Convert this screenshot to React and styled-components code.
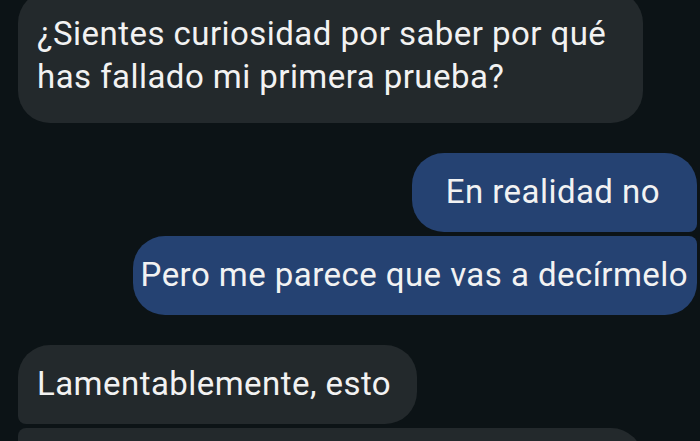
import React from 'react'
import styled, { createGlobalStyle } from 'styled-components'

const GlobalStyle = createGlobalStyle`
    html, body {
        margin: 0;
        padding: 0;
        background: #0c1316;
        height: 441px;
        overflow: hidden;
    }
    body {
        font-family: Roboto, "Liberation Sans", sans-serif;
    }
`;

const Thread = styled.div`
    display: flex;
    flex-direction: column;
    gap: 30px;
    padding: 0 3px 0 18px;
    width: 700px;
    box-sizing: border-box;
`;

const Group = styled.div`
    display: flex;
    flex-direction: column;
    gap: 4px;
    align-items: ${p => (p.$out ? 'flex-end' : 'flex-start')};
    margin-top: ${p => p.$offset || 0};
`;

const Bubble = styled.div`
    box-sizing: border-box;
    max-width: 625px;
    width: ${p => (p.$fill ? '625px' : 'auto')};
    min-height: ${p => (p.$fill ? '60px' : 'auto')};
    padding: ${p => p.$pad || '17px 26px 19px 19px'};
    background: ${p => (p.$out ? '#254272' : '#23292c')};
    color: #f2f2f2;
    border-radius: ${p => p.$radius || '32px'};
    font-size: 33px;
    letter-spacing: 0.45px;
    line-height: 43px;
    white-space: ${p => (p.$nowrap ? 'nowrap' : 'normal')};
`;

const App = () => {
    return (
        <>
            <GlobalStyle />
            <Thread>
                <Group $offset="-9px">
                    <Bubble $pad="21px 20px 25px 19px">
                        ¿Sientes curiosidad por saber por qué has fallado mi primera prueba?
                    </Bubble>
                </Group>
                <Group $out>
                    <Bubble $out $nowrap $pad="17px 37px 19px 34px" $radius="32px 32px 8px 32px">
                        En realidad no
                    </Bubble>
                    <Bubble $out $nowrap $pad="17px 9px 19px 8px" $radius="32px 8px 32px 32px">
                        Pero me parece que vas a decírmelo
                    </Bubble>
                </Group>
                <Group>
                    <Bubble $nowrap $radius="32px 32px 32px 8px">
                        Lamentablemente, esto
                    </Bubble>
                    <Bubble $fill $radius="8px 32px 32px 32px">&nbsp;</Bubble>
                </Group>
            </Thread>
        </>
    )
}

export default App
